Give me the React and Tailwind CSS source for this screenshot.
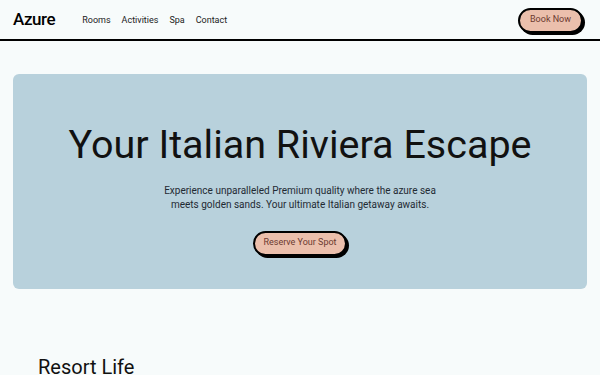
export default function App() {
  return (
    <div className="min-h-screen bg-[#f7fbfb] text-black" style={{ fontFamily: 'Roboto, "Liberation Sans", sans-serif' }}>
      <header className="h-[41px] border-b-2 border-black flex items-center justify-between px-[13px]">
        <div className="flex items-center">
          <span className="text-[17px] font-medium tracking-tight">Azure</span>
          <nav className="flex gap-[11px] ml-[27px] mt-[2px] text-[9px] text-[#222]">
            <a>Rooms</a>
            <a>Activities</a>
            <a>Spa</a>
            <a>Contact</a>
          </nav>
        </div>
        <button className="mr-[4px] mt-[1px] h-[25px] px-[10px] rounded-full bg-[#ebbfac] border-2 border-black shadow-[2px_2px_0_#000] text-[9px] text-[#6b3a30]">
          Book Now
        </button>
      </header>
      <main className="px-[13px] pt-[33px]">
        <section className="h-[215px] rounded-[6px] bg-[#b8d1dc] flex flex-col items-center pt-[51px]">
          <h1 className="text-[39.5px] leading-none text-[#111]">Your Italian Riviera Escape</h1>
          <p className="mt-[19px] w-[290px] text-center text-[10px] leading-[14px] text-[#1f2a33]">
            Experience unparalleled Premium quality where the azure sea meets golden sands. Your ultimate Italian getaway awaits.
          </p>
          <button className="mt-[19px] h-[25px] px-[8px] rounded-full bg-[#ebbfac] border-2 border-black shadow-[2px_2px_0_#000] text-[9px] text-[#6b3a30]">
            Reserve Your Spot
          </button>
        </section>
        <h2 className="mt-[63px] ml-[25px] text-[20px] text-[#111]">Resort Life</h2>
      </main>
    </div>
  );
}
